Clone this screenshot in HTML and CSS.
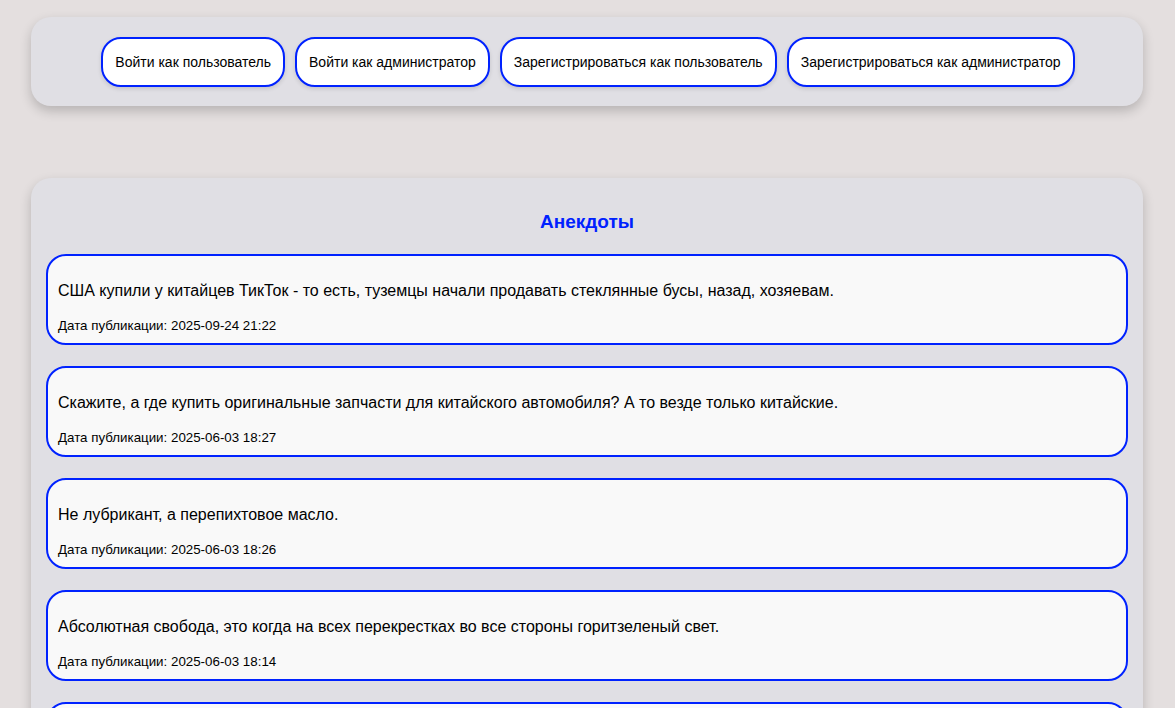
FILE: index.html
```html
<!DOCTYPE html>
<html lang="ru">
<head>
<meta charset="utf-8">
<title>Анекдоты</title>
<link rel="stylesheet" href="styles.css">
</head>
<body>
<header class="auth-bar">
  <button class="btn">Войти как пользователь</button>
  <button class="btn">Войти как администратор</button>
  <button class="btn">Зарегистрироваться как пользователь</button>
  <button class="btn">Зарегистрироваться как администратор</button>
</header>
<main class="jokes">
  <h2 class="jokes-title">Анекдоты</h2>
  <div class="joke">
    <p class="joke-text">США купили у китайцев ТикТок - то есть, туземцы начали продавать стеклянные бусы, назад, хозяевам.</p>
    <p class="joke-date">Дата публикации: 2025-09-24 21:22</p>
  </div>
  <div class="joke">
    <p class="joke-text">Скажите, а где купить оригинальные запчасти для китайского автомобиля? А то везде только китайские.</p>
    <p class="joke-date">Дата публикации: 2025-06-03 18:27</p>
  </div>
  <div class="joke">
    <p class="joke-text">Не лубрикант, а перепихтовое масло.</p>
    <p class="joke-date">Дата публикации: 2025-06-03 18:26</p>
  </div>
  <div class="joke">
    <p class="joke-text">Абсолютная свобода, это когда на всех перекрестках во все стороны горитзеленый свет.</p>
    <p class="joke-date">Дата публикации: 2025-06-03 18:14</p>
  </div>
  <div class="joke">
    <p class="joke-text">Ещё один анекдот.</p>
    <p class="joke-date">Дата публикации: 2025-06-03 18:10</p>
  </div>
</main>
</body>
</html>
```

FILE: styles.css
```css
html, body {
  margin: 0;
  padding: 0;
}
body {
  background: #e4dfdf;
  font-family: "Liberation Sans", Arial, sans-serif;
  color: #000;
  padding: 17px 32px 0 31px;
}
.auth-bar {
  background: #e0dfe4;
  border-radius: 20px;
  box-shadow: 0 5px 12px rgba(0, 0, 0, 0.2);
  display: flex;
  justify-content: center;
  gap: 10px;
  padding: 20px 15px 19px 17px;
}
.btn {
  font-family: "Liberation Sans", Arial, sans-serif;
  font-size: 14px;
  line-height: 16px;
  color: #000;
  background: #fff;
  border: 2px solid #0022ff;
  border-radius: 20px;
  padding: 15px 12px;
  box-shadow: 0 2px 4px rgba(0, 0, 0, 0.12);
  cursor: pointer;
}
.jokes {
  margin-top: 72px;
  background: #e0dfe4;
  border-radius: 20px 20px 0 0;
  box-shadow: 0 5px 12px rgba(0, 0, 0, 0.2);
  padding: 15px 15px 20px;
  display: flex;
  flex-direction: column;
  gap: 21px;
}
.jokes-title {
  margin: 18px 0 0;
  text-align: center;
  color: #0022ff;
  font-size: 19px;
  line-height: 22px;
  font-weight: bold;
}
.joke {
  background: #f9f9f9;
  border: 2px solid #0022ff;
  border-radius: 20px;
  padding: 10px 10px 10px;
}
.joke-text {
  margin: 16px 0 18px;
  font-size: 16px;
  line-height: 18px;
}
.joke-date {
  margin: 0;
  font-size: 13.33px;
  line-height: 15px;
}
```
